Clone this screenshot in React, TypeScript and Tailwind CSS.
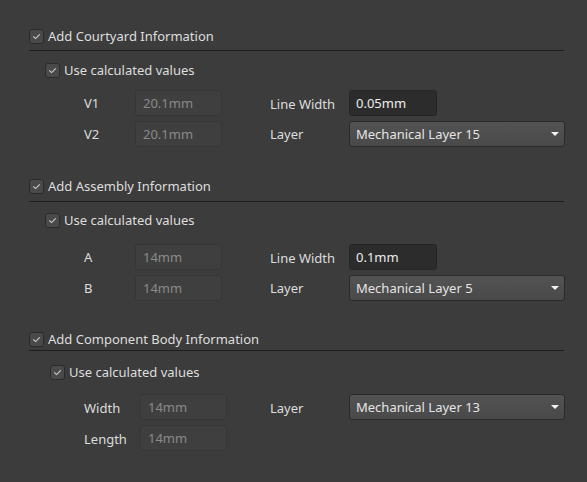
import React from "react";

/** Casilla marcada estilo Altium (oscura) */
function Check() {
  return (
    <div className="w-[15px] h-[15px] rounded-[3px] border border-[#2a2a2a] bg-[#4a4a4a] flex items-center justify-center shrink-0">
      <svg width="9" height="7" viewBox="0 0 9 7">
        <path d="M1.2 3.4 L3.6 5.6 L7.8 1.4" fill="none" stroke="#cfcfcf" strokeWidth="1.1" />
      </svg>
    </div>
  );
}

function Disabled({ value }: { value: string }) {
  return (
    <div className="w-[87px] h-[26px] rounded-[3px] border border-[#363636] bg-[#3f3f3f] px-[7px] flex items-center text-[#8a8a8a]">
      {value}
    </div>
  );
}

function Active({ value }: { value: string }) {
  return (
    <div className="w-[88px] h-[26px] rounded-[3px] border border-[#262626] bg-[#2c2c2c] px-[6px] flex items-center text-[#ececec]">
      {value}
    </div>
  );
}

function Select({ value }: { value: string }) {
  return (
    <div className="w-[216px] h-[26px] rounded-[3px] border border-[#2a2a2a] bg-gradient-to-b from-[#535353] to-[#494949] pl-[6px] pr-[5px] flex items-center justify-between text-[#e4e4e4]">
      <span>{value}</span>
      <svg width="8" height="4" viewBox="0 0 8 4">
        <path d="M0 0 H8 L4 4 Z" fill="#f2f2f2" />
      </svg>
    </div>
  );
}

function Header({ title, line }: { title: string; line: string }) {
  return (
    <>
      <div className="flex items-center gap-[4px] h-[15px]">
        <Check />
        <span className="text-[#dedede]">{title}</span>
      </div>
      <div className={`h-px bg-[#1e1e1e] mr-[23px] ${line}`} />
    </>
  );
}

function UseCalc({ cls }: { cls: string }) {
  return (
    <div className={`flex items-center gap-[4px] h-[15px] ${cls}`}>
      <Check />
      <span className="text-[#dedede]">Use calculated values</span>
    </div>
  );
}

export default function App() {
  return (
    <div
      className="w-[587px] h-[482px] bg-[#3c3c3c] pl-[29px] pt-[29px] text-[13px] leading-none text-[#dcdcdc]"
      style={{ fontFamily: '"Noto Sans", "Open Sans", sans-serif' }}
    >
      {/* Courtyard */}
      <Header title="Add Courtyard Information" line="mt-[6px]" />
      <UseCalc cls="mt-[12px] ml-[16px]" />
      <div className="mt-[12px] ml-[55px] flex flex-col gap-[5px]">
        <div className="flex items-center h-[26px]">
          <span className="w-[51px]">V1</span>
          <Disabled value="20.1mm" />
          <span className="ml-[48px] w-[79px] mt-[3px]">Line Width</span>
          <Active value="0.05mm" />
        </div>
        <div className="flex items-center h-[26px]">
          <span className="w-[51px]">V2</span>
          <Disabled value="20.1mm" />
          <span className="ml-[48px] w-[79px]">Layer</span>
          <Select value="Mechanical Layer 15" />
        </div>
      </div>

      {/* Assembly */}
      <div className="mt-[32px]">
        <Header title="Add Assembly Information" line="mt-[7px]" />
      </div>
      <UseCalc cls="mt-[11px] ml-[16px]" />
      <div className="mt-[16px] ml-[55px] flex flex-col gap-[5px]">
        <div className="flex items-center h-[26px]">
          <span className="w-[51px]">A</span>
          <Disabled value="14mm" />
          <span className="ml-[48px] w-[79px] mt-[3px]">Line Width</span>
          <Active value="0.1mm" />
        </div>
        <div className="flex items-center h-[26px]">
          <span className="w-[51px]">B</span>
          <Disabled value="14mm" />
          <span className="ml-[48px] w-[79px]">Layer</span>
          <Select value="Mechanical Layer 5" />
        </div>
      </div>

      {/* Component body */}
      <div className="mt-[31px]">
        <Header title="Add Component Body Information" line="mt-[3px]" />
      </div>
      <UseCalc cls="mt-[14px] ml-[21px]" />
      <div className="mt-[14px] ml-[55px] flex flex-col gap-[5px]">
        <div className="flex items-center h-[26px]">
          <span className="w-[56px] mt-[2px]">Width</span>
          <Disabled value="14mm" />
          <span className="ml-[43px] w-[79px] mt-[2px]">Layer</span>
          <Select value="Mechanical Layer 13" />
        </div>
        <div className="flex items-center h-[26px]">
          <span className="w-[56px] mt-[2px]">Length</span>
          <Disabled value="14mm" />
        </div>
      </div>
    </div>
  );
}
